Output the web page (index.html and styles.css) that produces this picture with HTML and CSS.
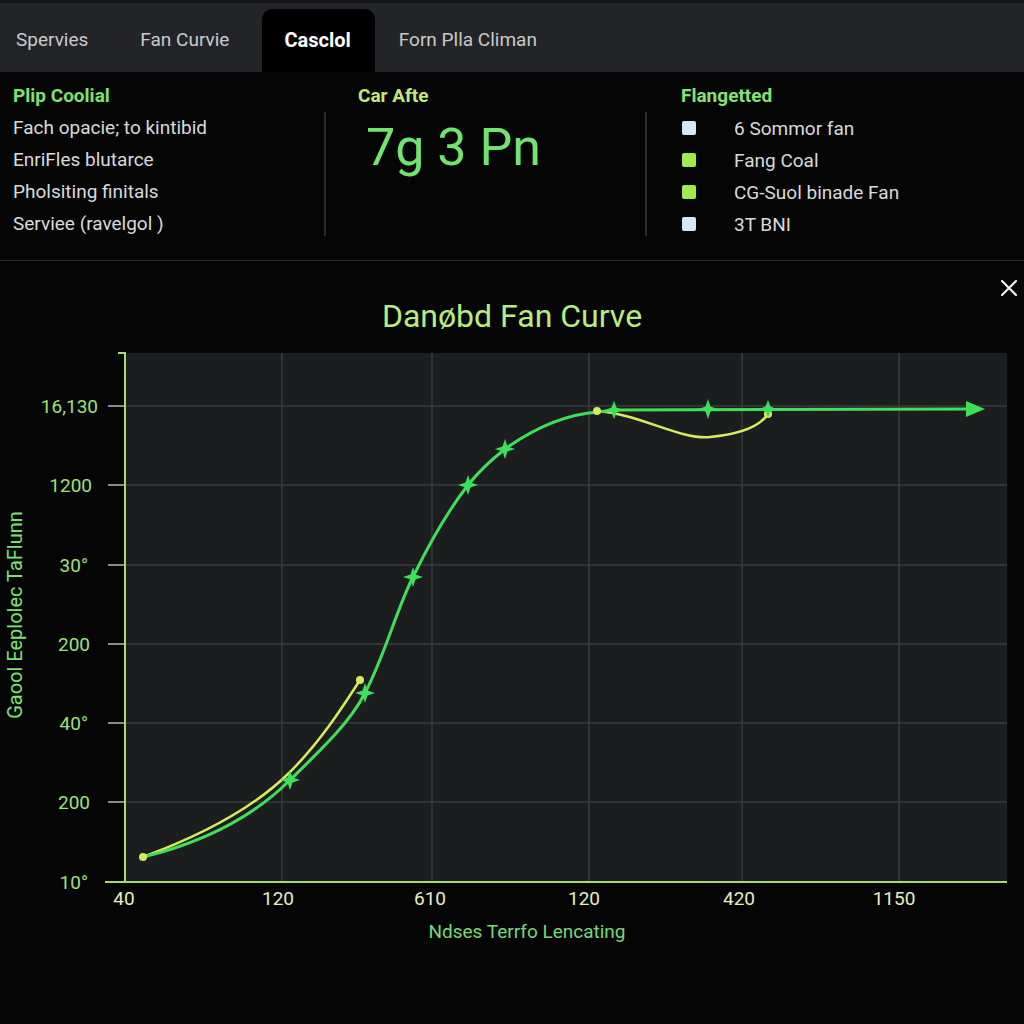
FILE: index.html
```html
<!DOCTYPE html>
<html lang="en">
<head>
<meta charset="utf-8">
<title>Fan Curve</title>
<link rel="stylesheet" href="styles.css">
</head>
<body>
<nav class="tabs">
  <div class="tab first">Spervies</div>
  <div class="tab second">Fan Curvie</div>
  <div class="tab active">Casclol</div>
  <div class="tab">Forn Plla Climan</div>
</nav>

<section class="info">
  <div class="col c1">
    <h3 class="head h-green">Plip Coolial</h3>
    <div class="col-body">
      <div class="line">Fach opacie; to kintibid</div>
      <div class="line">EnriFles blutarce</div>
      <div class="line">Pholsiting finitals</div>
      <div class="line">Serviee (ravelgol )</div>
    </div>
  </div>
  <div class="col c2">
    <h3 class="head h-yellow">Car Afte</h3>
    <div class="col-body sep">
      <div class="big">7g 3 Pn</div>
    </div>
  </div>
  <div class="col c3">
    <h3 class="head h-green2">Flangetted</h3>
    <div class="col-body sep">
      <div class="item"><span class="sw sw-light"></span><span>6 Sommor fan</span></div>
      <div class="item"><span class="sw sw-green"></span><span>Fang Coal</span></div>
      <div class="item"><span class="sw sw-green"></span><span>CG-Suol binade Fan</span></div>
      <div class="item"><span class="sw sw-light"></span><span>3T BNI</span></div>
    </div>
  </div>
</section>

<section class="chart">
  <button class="close" aria-label="Close">
    <svg width="18" height="18" viewBox="0 0 18 18"><path d="M2 2 L16 16 M16 2 L2 16" stroke="#f2f2f2" stroke-width="2.2" stroke-linecap="round" fill="none"/></svg>
  </button>
  <h2 class="title">Danøbd Fan Curve</h2>
  <svg class="plot" width="1024" height="620" viewBox="0 333 1024 620">
    <rect x="125" y="353" width="882" height="529" fill="#1c1d1f"/>
    <g stroke="#3a3b3e" stroke-width="1.5">
      <line x1="125" y1="406" x2="1007" y2="406"/>
      <line x1="125" y1="485" x2="1007" y2="485"/>
      <line x1="125" y1="565" x2="1007" y2="565"/>
      <line x1="125" y1="644" x2="1007" y2="644"/>
      <line x1="125" y1="723" x2="1007" y2="723"/>
      <line x1="125" y1="802" x2="1007" y2="802"/>
      <line x1="282" y1="353" x2="282" y2="882"/>
      <line x1="432" y1="353" x2="432" y2="882"/>
      <line x1="589" y1="353" x2="589" y2="882"/>
      <line x1="742" y1="353" x2="742" y2="882"/>
      <line x1="899" y1="353" x2="899" y2="882"/>
    </g>
    <g stroke="#b9bdb0" stroke-width="1.5">
      <line x1="108" y1="406" x2="125" y2="406"/>
      <line x1="108" y1="485" x2="125" y2="485"/>
      <line x1="108" y1="565" x2="125" y2="565"/>
      <line x1="108" y1="644" x2="125" y2="644"/>
      <line x1="108" y1="723" x2="125" y2="723"/>
      <line x1="108" y1="802" x2="125" y2="802"/>
    </g>
    <g stroke="#a6dc6c" stroke-width="2">
      <line x1="125" y1="352" x2="125" y2="883"/>
      <line x1="105" y1="882" x2="1007" y2="882"/>
      <line x1="118" y1="353" x2="125" y2="353"/>
    </g>

    <g class="ylab" text-anchor="end">
      <text x="98" y="413">16,130</text>
      <text x="92" y="492">1200</text>
      <text x="88" y="572">30°</text>
      <text x="90" y="651">200</text>
      <text x="88" y="730">40°</text>
      <text x="90" y="809">200</text>
      <text x="88" y="889">10°</text>
    </g>
    <text class="ytitle" transform="translate(22 615) rotate(-90)" text-anchor="middle">Gaool Eeplolec TaFlunn</text>

    <g class="xlab" text-anchor="middle">
      <text x="124" y="905">40</text>
      <text x="278" y="905">120</text>
      <text x="430" y="905">610</text>
      <text x="584" y="905">120</text>
      <text x="739" y="905">420</text>
      <text x="894" y="905">1150</text>
    </g>
    <text class="xtitle" x="527" y="938" text-anchor="middle">Ndses Terrfo Lencating</text>

    <g fill="none" stroke="#d6ec5e" stroke-width="2.5" stroke-linecap="round">
      <path d="M143 857 C200 836 252 810 290 772 C320 742 342 708 360 680"/>
      <path d="M597 411 C640 414 680 440 710 437 C742 434 760 426 768 414"/>
    </g>
    <path fill="none" stroke="#3ee05a" stroke-width="3" stroke-linecap="round"
      d="M143 857 C205 842 255 815 290 780 C325 746 350 722 365 693 C385 655 397 608 413 577 C430 542 447 512 468 485 C480 470 491 460 505 449 C540 424 570 414 598 412 L614 410 L968 409"/>
    <polygon points="966,401 985,409 966,417" fill="#3ee05a"/>
    <g fill="#d6ec5e">
      <circle cx="143" cy="857" r="4"/>
      <circle cx="360" cy="680" r="4"/>
      <circle cx="597" cy="411" r="4"/>
      <circle cx="768" cy="414" r="4"/>
    </g>
    <g fill="#3ee05a">
      <path d="M290 770 L292.5 777.5 L300 780 L292.5 782.5 L290 790 L287.5 782.5 L280 780 L287.5 777.5 Z"/>
      <path d="M365 683 L367.5 690.5 L375 693 L367.5 695.5 L365 703 L362.5 695.5 L355 693 L362.5 690.5 Z"/>
      <path d="M413 567 L415.5 574.5 L423 577 L415.5 579.5 L413 587 L410.5 579.5 L403 577 L410.5 574.5 Z"/>
      <path d="M468 475 L470.5 482.5 L478 485 L470.5 487.5 L468 495 L465.5 487.5 L458 485 L465.5 482.5 Z"/>
      <path d="M505 439 L507.5 446.5 L515 449 L507.5 451.5 L505 459 L502.5 451.5 L495 449 L502.5 446.5 Z"/>
      <path d="M614 401 L616.5 407.5 L623 410 L616.5 412.5 L614 419 L611.5 412.5 L605 410 L611.5 407.5 Z"/>
      <path d="M708 399 L710.5 406.5 L718 409 L710.5 411.5 L708 419 L705.5 411.5 L698 409 L705.5 406.5 Z"/>
      <path d="M768 400 L770.5 406.5 L777 409 L770.5 411.5 L768 418 L765.5 411.5 L759 409 L765.5 406.5 Z"/>
    </g>
  </svg>
</section>
</body>
</html>
```

FILE: styles.css
```css
* { box-sizing: border-box; }

html, body {
  margin: 0;
  padding: 0;
  background: #050505;
  color: #dcdcdc;
  font-family: "Roboto", "Liberation Sans", Arial, sans-serif;
}

body {
  width: 1024px;
  height: 1024px;
  overflow: hidden;
}

/* Tabs */
.tabs {
  display: flex;
  align-items: flex-end;
  height: 72px;
  background: #232427;
  border-top: 3px solid #141516;
}

.tab {
  height: 63px;
  padding: 0 26px 2px;
  display: flex;
  align-items: center;
  font-size: 19px;
  color: #c9cacc;
}

.tab.first { padding-left: 16px; }
.tab.second { padding-right: 33px; }

.tab.active {
  background: #000;
  color: #fff;
  font-weight: 700;
  font-size: 20px;
  border-radius: 10px 10px 0 0;
  padding: 0 24px 2px 22px;
}

.tab.active + .tab { padding-left: 24px; }

/* Info */
.info {
  display: grid;
  grid-template-columns: 324px 321px 1fr;
  height: 189px;
  padding-top: 12px;
  border-bottom: 1px solid #2c2d2f;
}

.head {
  margin: 0;
  height: 24px;
  line-height: 24px;
  font-size: 19px;
  font-weight: 700;
}

.c1 .head { padding-left: 13px; }
.c2 .head { padding-left: 34px; }
.c3 .head { padding-left: 36px; }

.h-green { color: #7ee272; }
.h-yellow { color: #c2ea78; }
.h-green2 { color: #86e272; }

.col-body {
  margin-top: 4px;
  height: 124px;
}

.col-body.sep { border-left: 2px solid #2a2b2d; }

.c1 .col-body { padding-left: 13px; }

.line {
  height: 32px;
  line-height: 32px;
  font-size: 19px;
  color: #dadada;
  white-space: nowrap;
}

.big {
  padding-left: 40px;
  padding-top: 8px;
  font-size: 52px;
  line-height: 56px;
  color: #72e36f;
}

.c3 .col-body { padding-left: 35px; }

.item {
  display: flex;
  align-items: center;
  height: 32px;
  font-size: 19px;
  color: #dadada;
}

.sw {
  width: 14px;
  height: 14px;
  border-radius: 2px;
  margin-right: 38px;
}

.sw-light { background: #dae8f2; }
.sw-green { background: #a2ea54; }

/* Chart */
.chart {
  position: relative;
}

.close {
  position: absolute;
  right: 6px;
  top: 18px;
  background: none;
  border: 0;
  padding: 0;
  width: 18px;
  height: 18px;
}

.title {
  margin: 0;
  padding-top: 38px;
  height: 72px;
  line-height: 34px;
  text-align: center;
  font-size: 32px;
  font-weight: 400;
  color: #b8ec7c;
}

.plot {
  display: block;
}

.ylab text {
  font-family: "Roboto", "Liberation Sans", sans-serif;
  font-size: 19px;
  fill: #9fe274;
}

.ytitle {
  font-family: "Roboto", "Liberation Sans", sans-serif;
  font-size: 20px;
  fill: #7ee272;
}

.xlab text {
  font-family: "Roboto", "Liberation Sans", sans-serif;
  font-size: 19px;
  fill: #e6efc0;
}

.xtitle {
  font-family: "Roboto", "Liberation Sans", sans-serif;
  font-size: 19px;
  fill: #76d878;
}
```
